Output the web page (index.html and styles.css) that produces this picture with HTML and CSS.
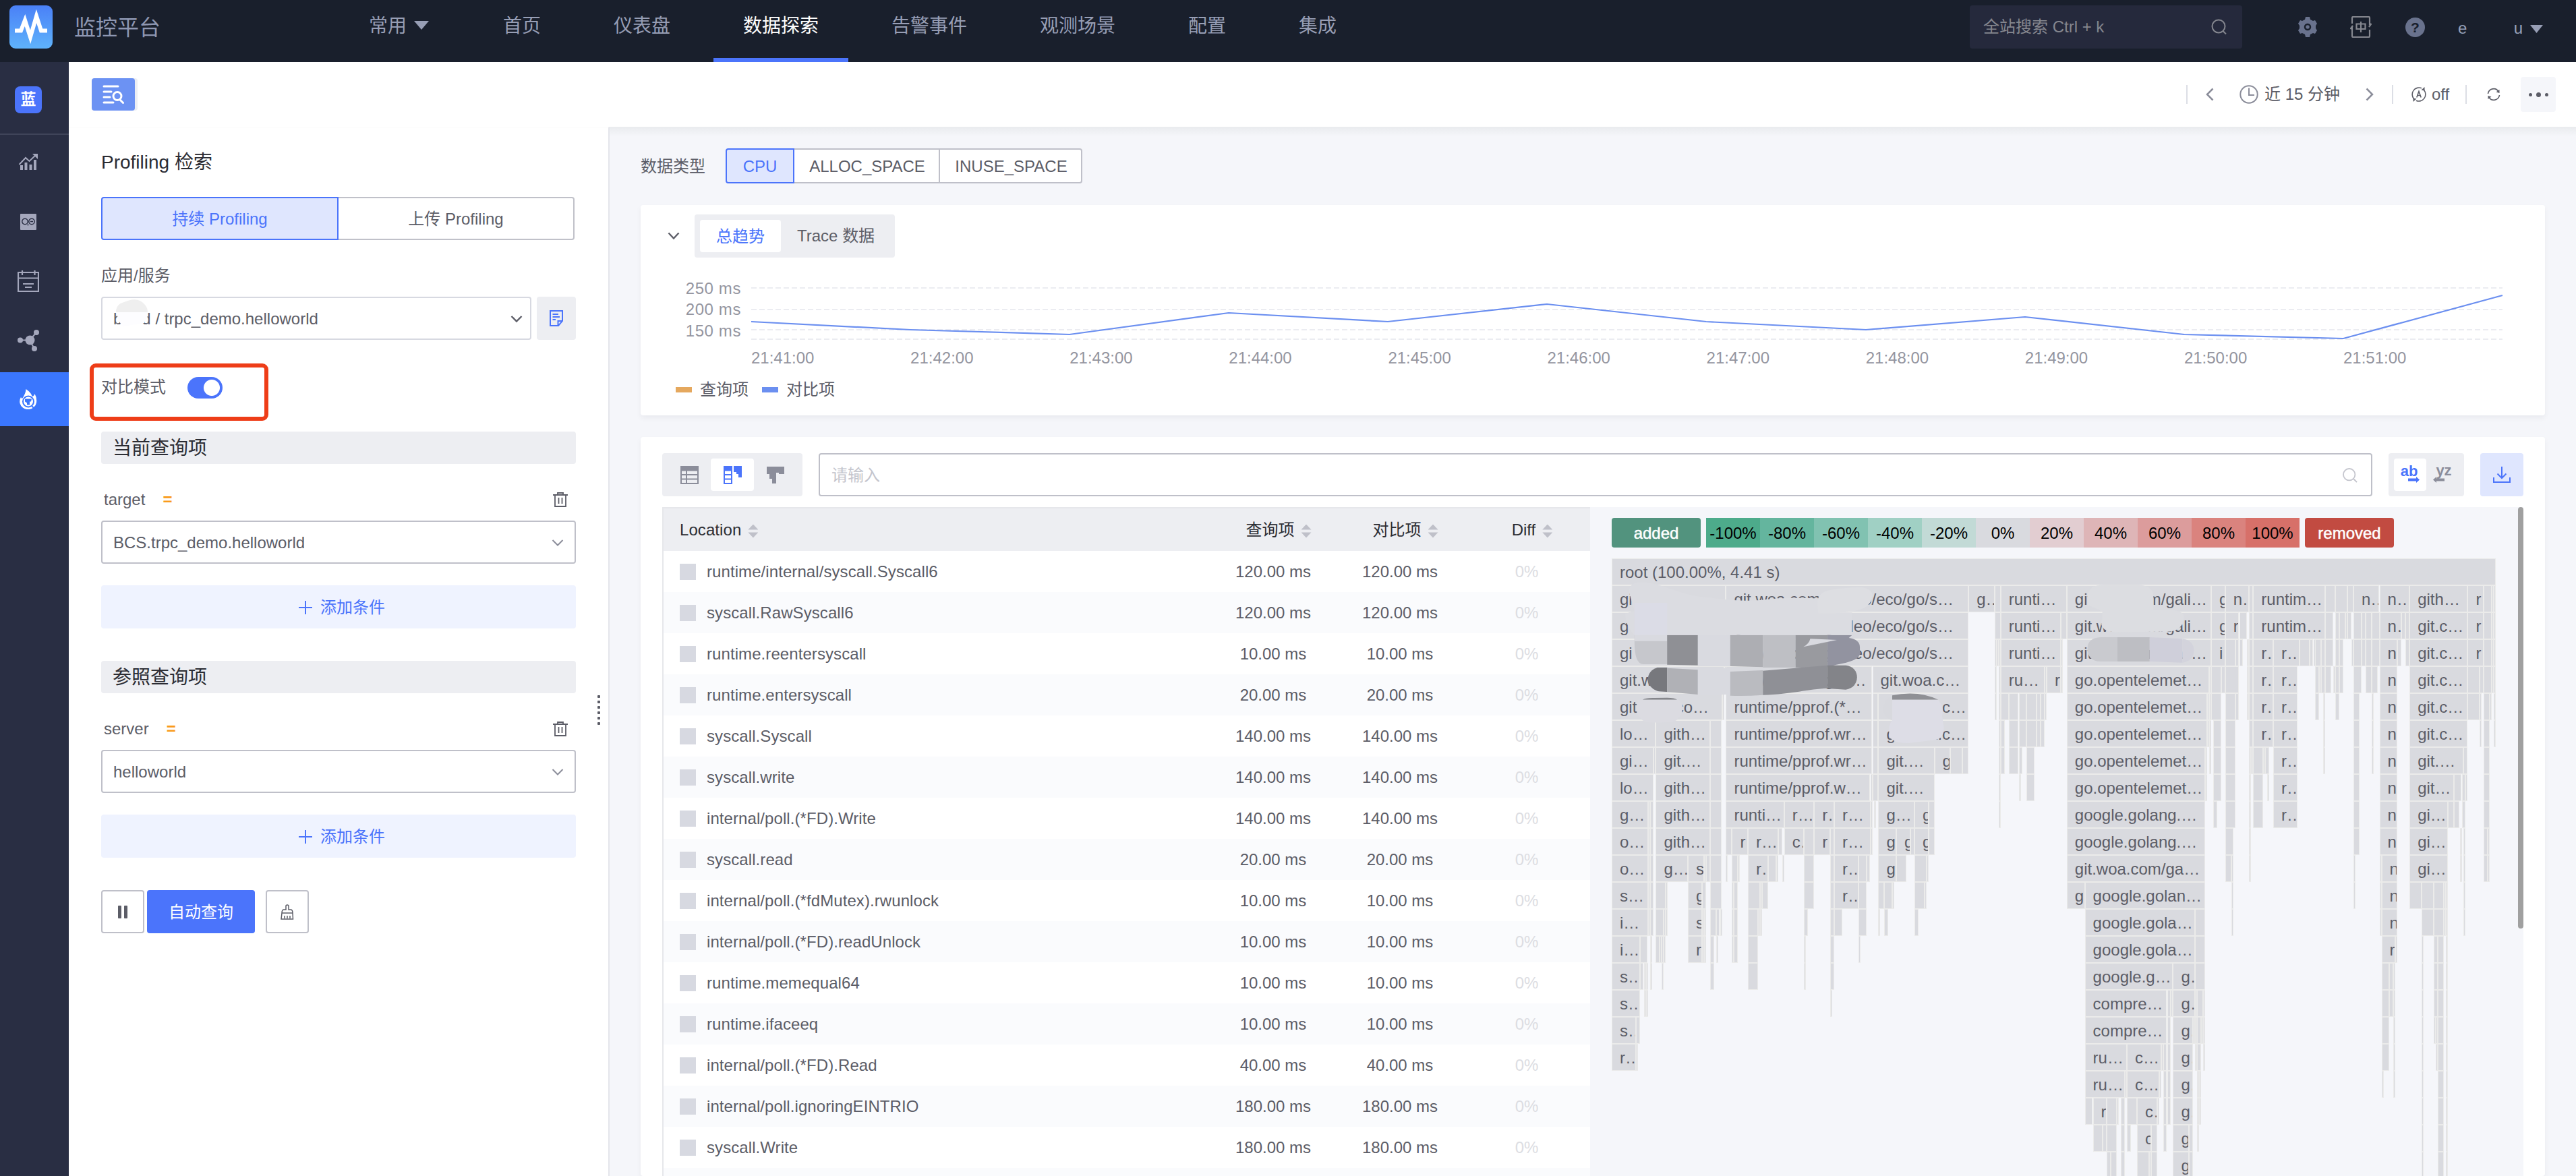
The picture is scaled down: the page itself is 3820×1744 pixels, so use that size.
FILE: index.html
```html
<!DOCTYPE html>
<html lang="zh-CN">
<head>
<meta charset="utf-8">
<title>监控平台</title>
<link rel="stylesheet" href="styles.css">
</head>
<body>
<header class="header">
  <svg class="logo" width="64" height="64" viewBox="0 0 64 64"><defs><linearGradient id="lg" x1="0" y1="0" x2="0" y2="1"><stop offset="0" stop-color="#4a80f7"/><stop offset="1" stop-color="#5fb3fb"/></linearGradient></defs><rect width="64" height="64" rx="9" fill="url(#lg)"/><path d="M8 37.500H17L23 22L31 47L40 16L47 37.500H56" fill="none" stroke="#fff" stroke-width="6"/></svg>
  <h1 class="brand">监控平台</h1>
  <nav class="nav">
    <a class="nav-item">常用<i class="tri"></i></a><a class="nav-item">首页</a><a class="nav-item">仪表盘</a><a class="nav-item active">数据探索</a><a class="nav-item">告警事件</a><a class="nav-item">观测场景</a><a class="nav-item">配置</a><a class="nav-item">集成</a>
  </nav>
  <div class="site-search"><span>全站搜索 Ctrl + k</span><svg width="24" height="24" viewBox="0 0 24 24" fill="none" stroke="#85878f" stroke-width="2"><circle cx="11" cy="11" r="9.500"/><path d="M17.500 18L22 22.500"/></svg></div>
  <svg class="h-gear" width="28" height="30" viewBox="0 0 28 30"><path fill="#69728d" d="M11 0h6l1 4 4 2 3-1 3 5-2 3v4l2 3-3 5-3-1-4 2-1 4h-6l-1-4-4-2-3 1-3-5 2-3v-4l-2-3 3-5 3 1 4-2z"/><circle cx="14" cy="15" r="4" fill="none" stroke="#191f2c" stroke-width="2.500"/></svg>
  <svg class="h-lang" width="32" height="32" viewBox="0 0 32 32" fill="none" stroke="#85878f" stroke-width="2.200"><path d="M3 11V2.500Q3 1 4.500 1H27.500Q29 1 29 2.500V13M29 20V29.500Q29 31 27.500 31H4.500Q3 31 3 29.500V16M.5 19L4 14M28 16L31.500 11M9.500 11.500H22.500V19H9.500ZM16 8V24"/></svg>
  <span class="h-help">?</span>
  <span class="user"><span>e</span><span>u</span></span><i class="tri user-tri"></i>
</header>
<div class="body">
  <aside class="side">
    <div class="biz"><span>蓝</span></div>
    <div class="side-item"><svg width="32" height="30" viewBox="0 0 32 30"><path d="M4 19h4v7H4zM10.500 15h4v11h-4zM17.500 18h4v8h-4zM24 11h4v15h-4z" fill="#a4a7bc"/><path d="M2.500 18L12 8L17.500 13L27 4" fill="none" stroke="#a4a7bc" stroke-width="2"/><path d="M22 2h8v8z" fill="#a4a7bc"/></svg></div>
    <div class="side-item"><svg width="24" height="24" viewBox="0 0 24 24"><rect width="24" height="24" rx="1" fill="#a4a7bc"/><g fill="none" stroke="#292e43" stroke-width="1.400"><circle cx="7" cy="11.500" r="4.200"/><circle cx="17" cy="11.500" r="4.200"/><path d="M15 11.500h4M10.500 16.500h2"/></g></svg></div>
    <div class="side-item"><svg width="32" height="32" viewBox="0 0 32 32" fill="none" stroke="#a4a7bc" stroke-width="2.200"><path d="M1 3H31V31H1ZM1 11.500H31M7 0V7M25.500 0V7M8 20H24M11 25H21"/></svg></div>
    <div class="side-item"><svg width="32" height="32" viewBox="0 0 32 32" fill="#a4a7bc"><path d="M4 15.500H18L28 4M18 16L25 28" stroke="#a4a7bc" stroke-width="2" fill="none"/><circle cx="18.500" cy="15.500" r="7"/><circle cx="4" cy="15.500" r="4"/><circle cx="28" cy="4" r="4"/><circle cx="25" cy="28" r="4"/></svg></div>
    <div class="side-item on"><svg width="26" height="30" viewBox="0 0 26 30"><path fill="#fff" d="M9.500 0C14 3 18 7 18.500 11Q22 10 22.500 7Q26 13 25 20A12.500 12 0 0 1 .5 21Q-.5 16 2 12Q3 14 4 14Q9 7 9.500 0Z"/><circle cx="13" cy="18.500" r="8" fill="none" stroke="#3a76fd" stroke-width="2"/><path d="M8 14.500h10l-1 4h-2v5h-4v-3l-3-2z" fill="#3a76fd"/><path d="M18 25l4 4" stroke="#3a76fd" stroke-width="2"/></svg></div>
  </aside>
  <main class="main">
    <div class="toolbar">
      <button class="filter-btn"><svg width="32" height="28" viewBox="0 0 32 28" fill="none" stroke="#fff" stroke-width="3" stroke-linecap="round"><path d="M2 2H23M2 10H13M2 18H11M2 26H16M26 22L30.500 26.500"/><circle cx="22" cy="16.500" r="6"/></svg></button>
      <div class="time-tools">
        <i class="vline"></i>
        <svg class="m27" width="12" height="20" viewBox="0 0 12 20" fill="none" stroke="#8b8d9a" stroke-width="2.500"><path d="M10.500 1.500L2 10L10.500 18.500"/></svg>
        <svg class="m38" width="28" height="28" viewBox="0 0 28 28" fill="none" stroke="#8b8d9a" stroke-width="2"><circle cx="14" cy="14" r="12.700"/><path d="M14 4.500V15H22"/></svg>
        <span class="t-range">近 15 分钟</span>
        <svg class="m38" width="12" height="20" viewBox="0 0 12 20" fill="none" stroke="#8b8d9a" stroke-width="2.500"><path d="M1.500 1.500L10 10L1.500 18.500"/></svg>
        <i class="vline m27"></i>
        <svg class="m27" width="22" height="24" viewBox="0 0 22 24" fill="none" stroke="#5c5d67" stroke-width="1.600"><path d="M3.500 18.500A10 10 0 0 1 15 2.800M18.500 5.500A10 10 0 0 1 7 21.200M7.800 16.500L11 7.500L14.200 16.500M8.800 13.500H13.200"/><path d="M14.500 5.500L19.500 1V6.500ZM7.500 18.500L2.500 23V17.500Z" fill="#5c5d67" stroke="none"/></svg>
        <span class="off">off</span>
        <i class="vline m22"></i>
        <svg class="m30" width="20" height="20" viewBox="0 0 20 20" fill="none" stroke="#5c5d67" stroke-width="1.600"><path d="M1.500 9A8.500 8.500 0 0 1 17 5.500M18.500 11A8.500 8.500 0 0 1 3 14.500"/><path d="M13.500 6.500L18.500 3V8ZM6.500 13.500L1.500 17V12Z" fill="#5c5d67" stroke="none"/></svg>
        <span class="more"><i></i><i class="mid"></i><i></i></span>
      </div>
    </div>
    <div class="cols">
      <section class="query">
        <h2 class="q-title">Profiling 检索</h2>
        <div class="tabs"><span class="on">持续 Profiling</span><span>上传 Profiling</span></div>
        <div class="label">应用/服务</div>
        <div class="app-row">
          <div class="select light"><span>b</span><span class="masked">d / trpc_demo.helloworld</span><svg class="chev" width="18" height="12" viewBox="0 0 18 12" fill="none" stroke="#5c5d67" stroke-width="2.400"><path d="M1.500 2L9 9.500L16.500 2"/></svg>
            <svg class="smudge" width="50" height="42" viewBox="0 0 50 42"><path d="M2 20Q2 8 14 5Q34 -4 44 8Q49 13 49 20Z" fill="#efefef"/><path d="M3 20H49V26Q44 32 44 36L12 41Q4 32 3 20Z" fill="#fdfdff"/></svg></div>
          <div class="doc-btn"><svg width="20" height="24" viewBox="0 0 20 24" fill="none" stroke="#4b74fb" stroke-width="2"><path d="M1 1H19V16L13 23H1ZM12.500 22V16H18M4.500 6H13M4.500 10H15M4.500 14H9"/></svg></div>
        </div>
        <div class="compare"><span>对比模式</span><i class="toggle"></i><i class="redbox"></i></div>
        <div class="group">当前查询项</div>
        <div class="field"><span>target</span><b>=</b><svg width="22" height="22" viewBox="0 0 22 22" fill="none" stroke="#5c5d67" stroke-width="1.800"><path d="M0 4H22M7 3V1H15V3M3 4V21H19V4M8.500 8V17M13.500 8V17"/></svg></div>
        <div class="select"><span>BCS.trpc_demo.helloworld</span><svg class="chev" width="18" height="12" viewBox="0 0 18 12" fill="none" stroke="#8b8d9a" stroke-width="2"><path d="M1.500 2L9 9.500L16.500 2"/></svg></div>
        <div class="add"><svg width="20" height="20" viewBox="0 0 20 20" stroke="#4b74fb" stroke-width="2"><path d="M0 10H20M10 0V20"/></svg>添加条件</div>
        <div class="group second">参照查询项</div>
        <div class="field"><span>server</span><b>=</b><svg width="22" height="22" viewBox="0 0 22 22" fill="none" stroke="#5c5d67" stroke-width="1.800"><path d="M0 4H22M7 3V1H15V3M3 4V21H19V4M8.500 8V17M13.500 8V17"/></svg></div>
        <div class="select"><span>helloworld</span><svg class="chev" width="18" height="12" viewBox="0 0 18 12" fill="none" stroke="#8b8d9a" stroke-width="2"><path d="M1.500 2L9 9.500L16.500 2"/></svg></div>
        <div class="add"><svg width="20" height="20" viewBox="0 0 20 20" stroke="#4b74fb" stroke-width="2"><path d="M0 10H20M10 0V20"/></svg>添加条件</div>
        <div class="actions"><span class="sq"><svg width="14" height="19" viewBox="0 0 14 19" fill="#5c5d67"><rect width="5" height="19" rx="1"/><rect x="9" width="5" height="19" rx="1"/></svg></span><span class="run">自动查询</span><span class="sq"><svg width="20" height="23" viewBox="0 0 20 23" fill="none" stroke="#5c5d67" stroke-width="1.500"><path d="M8 8V2Q10 0 12 2V8H15Q18 8 18 13H2Q2 8 5 8ZM2 13L1 22H18.500L18 13M6 21V17M10 21V17M14 21V17"/></svg></span></div>
        <div class="grip"><i></i><i></i><i></i><i></i><i></i><i></i></div>
      </section>
      <section class="content">
        <div class="type-row"><span>数据类型</span><div class="radios"><span class="on">CPU</span><span>ALLOC_SPACE</span><span>INUSE_SPACE</span></div></div>
        <div class="card trend">
          <div class="trend-head"><svg width="18" height="12" viewBox="0 0 18 12" fill="none" stroke="#5c5d67" stroke-width="2.400"><path d="M1.500 1.500L9 9.500L16.500 1.500"/></svg><div class="seg"><span class="on">总趋势</span><span>Trace 数据</span></div></div>
          <svg class="chart" width="2824" height="168" viewBox="950 382 2824 168">
            <g stroke="#ebecf1" stroke-width="2" stroke-dasharray="8 4"><path d="M1114 427H3711M1114 459H3711M1114 489H3711M1114 503H3711"/></g>
            <g class="axis y-axis" text-anchor="end"><text x="1099" y="436">250 ms</text><text x="1099" y="467">200 ms</text><text x="1099" y="499">150 ms</text></g>
            <g class="axis" id="ticks"></g>
            <polyline fill="none" stroke="#6b8ff0" stroke-width="2.200" points="1114,477 1350,489 1586,496 1822,464 2058,477 2294,451 2530,477 2767,489 3003,470 3239,496 3475,502 3711,438"/>
          </svg>
          <div class="legend"><i class="orange"></i>查询项<i class="blue"></i>对比项</div>
        </div>
        <div class="card profile">
          <div class="p-tools">
            <div class="views">
              <span><svg width="27" height="27" viewBox="0 0 27 27" fill="none" stroke="#8b8d9a" stroke-width="2"><path d="M1 1H26V26H1ZM1 13H26M1 19.500H26M9 7V26"/><path d="M0 0H27V7.500H0Z" fill="#8b8d9a" stroke="none"/></svg></span>
              <span class="on"><svg width="27" height="27" viewBox="0 0 27 27" fill="none" stroke="#4b74fb" stroke-width="2"><path d="M1 1H12V26H1ZM1 13H12M1 19.500H12"/><path d="M0 0H13V7.500H0ZM15 0H27V17H22V12H19V9H15Z" fill="#4b74fb" stroke="none"/></svg></span>
              <span><svg width="26" height="25" viewBox="0 0 26 25" fill="#8b8d9a"><path d="M0 0H26V11H18V9H14V25H8V18H4V11H0Z"/></svg></span>
            </div>
            <div class="search"><span>请输入</span><svg width="22" height="22" viewBox="0 0 22 22" fill="none" stroke="#c4c5cd" stroke-width="1.800"><circle cx="9.700" cy="9.700" r="8.700"/><path d="M16 16L21 21"/></svg></div>
            <div class="views dirs"><span class="on"><b class="ab">ab<svg width="17" height="9" viewBox="0 0 17 9" fill="#4b74fb"><path d="M0 2.500H12V0L17 4.500L12 9V6.500H0Z"/></svg></b></span><span><b class="yz">yz<svg width="17" height="9" viewBox="0 0 17 9" fill="#8b8d9a"><path d="M17 2.500H5V0L0 4.500L5 9V6.500H17Z"/></svg></b></span></div>
            <div class="download"><svg width="26" height="24" viewBox="0 0 26 24" fill="none" stroke="#4b74fb" stroke-width="2"><path d="M1 16V23H25V16M13 0V16M6.500 10.500L13 17L19.500 10.500"/></svg></div>
          </div>
          <div class="p-body">
            <div class="table">
              <div class="tr th"><div class="loc">Location<i class="sort"></i></div><div class="num">查询项<i class="sort"></i></div><div class="num">对比项<i class="sort"></i></div><div class="num">Diff<i class="sort"></i></div></div>
              <div id="rows"></div>
            </div>
            <div class="flame">
              <div class="scale"><span class="cap added">added</span><span class="cell c1">-100%</span><span class="cell c2">-80%</span><span class="cell c3">-60%</span><span class="cell c4">-40%</span><span class="cell c5">-20%</span><span class="cell c6">0%</span><span class="cell c7">20%</span><span class="cell c8">40%</span><span class="cell c9">60%</span><span class="cell c10">80%</span><span class="cell c11">100%</span><span class="cap removed">removed</span></div>
              <div id="graph"></div>
              <svg class="mask mask-a" width="730" height="500" viewBox="0 0 1568 1500" preserveAspectRatio="none">
                <path d="M137 605V632Q137 735 165 735H241V605Z" fill="#c6c7cc"/><path d="M137 605H241L339 632H137Z" fill="#d9dae0"/>
                <path d="M241 605H339V740L241 737Z" fill="#8f9095"/><path d="M339 605H442V745H339Z" fill="#d9dae0"/><path d="M442 605H546V748L442 744Z" fill="#adaeb3"/><path d="M546 605H650V750H546Z" fill="#bebfc4"/><path d="M650 605H752V750H650Z" fill="#999a9f"/><path d="M752 605H830L820 618Q855 625 855 660V690Q850 722 780 737L752 748Z" fill="#9293a0"/>
                <path d="M697 622L782 627L675 658Q693 645 697 622Z" fill="#d9dae0"/>
                <path d="M241 750H210C170 765 168 840 215 856L241 858Z" fill="#77787d"/><path d="M241 752L339 760V870L241 858Z" fill="#b0b1b6"/><path d="M339 752H442V870H339Z" fill="#d9dae0"/><path d="M442 768L546 762V872Q490 878 442 875Z" fill="#babbc0"/><path d="M546 764L752 740V842C690 845 640 868 546 872Z" fill="#8f9096"/><path d="M752 740H810C858 745 858 840 810 848L752 843Z" fill="#838489"/>
                <path d="M119 410C122 370 150 365 185 374C240 385 290 430 370 438C440 450 500 458 560 446C620 438 680 440 722 442L735 505H830V605H137C125 590 105 545 108 510L137 497Z" fill="#dbdce1"/>
                <path d="M137 462H241V605H137Z" fill="#dbdce6"/><path d="M720 455C725 400 770 400 850 392C900 395 900 430 888 460C870 500 830 500 780 508H722Z" fill="#dddee2"/>
                <path d="M163 893Q172 884 200 885L241 884V893ZM241 884Q265 884 273 893H241Z" fill="#85868b"/><path d="M147 893H280Q296 915 288 950Q280 990 250 992Q185 998 170 990Q140 970 145 920Z" fill="#dbdbe1"/>
                <path d="M930 930Q935 885 958 875V985Q930 975 930 930Z" fill="#d8d9de"/><path d="M958 874Q1040 850 1105 893H958Z" fill="#8f9095"/><path d="M958 893H1105Q1125 930 1117 965L1122 1010Q1125 1065 1095 1072L1010 1086Q945 1085 948 1040Q945 1005 958 985Z" fill="#dddde6"/>
              </svg>
              <svg class="mask mask-b" width="730" height="500" viewBox="0 0 1568 1500" preserveAspectRatio="none">
                <path d="M98 462V425Q105 382 150 382H260Q305 385 308 430V495H370Q405 497 405 530Q400 590 350 590L190 592Q130 590 145 530V500L98 470Z" fill="#dcdde1"/>
                <path d="M193 615H140Q98 618 98 665Q98 722 140 723H193Z" fill="#c9cacf"/><path d="M193 615H296V723H193Z" fill="#bdbec3"/><path d="M296 615L400 622V728L296 723Z" fill="#cfcfda"/><path d="M400 622Q437 630 437 675Q435 722 400 728Z" fill="#d3d3dc"/>
              </svg>
              <i class="bar"></i>
            </div>
          </div>
        </div>
      </section>
    </div>
  </main>
</div>
<script src="app.js"></script>
</body>
</html>
```
FILE: styles.css
```css
* { box-sizing: border-box; }
html, body { margin: 0; height: 1744px; overflow: hidden; }
body { font: 24px/32px "Liberation Sans", "Noto Sans CJK SC", sans-serif; color: #5c5d67; background: #fff; }
h1, h2 { margin: 0; font-weight: 400; }
svg { display: block; flex: none; }
i { font-style: normal; flex: none; }

.header { height: 92px; display: flex; align-items: flex-start; background: #191f2c; color: #96a0b9; padding-left: 14px; }
.logo { margin-top: 8px; }
.brand { margin: 21px 0 0 32px; width: 128px; font-size: 32px; line-height: 40px; white-space: nowrap; color: #8e97b2; }
.nav { display: flex; gap: 20px; margin-left: 265px; }
.nav-item { height: 92px; padding: 18px 44px 0; font-size: 28px; line-height: 42px; display: flex; color: #979eb5; white-space: nowrap; }
.nav-item.active { color: #fff; border-bottom: 6px solid #4b74fb; }
.tri { width: 22px; height: 13px; background: #979eb5; clip-path: polygon(0 0, 100% 0, 50% 100%); margin: 13px 2px 0 11px; }
.site-search { margin: 8px 0 0 auto; width: 404px; height: 64px; border-radius: 4px; background: #25293c; display: flex; align-items: center; justify-content: space-between; padding: 0 22px 0 20px; color: #85878f; }
.h-gear { margin: 25px 0 0 83px; }
.h-lang { margin: 24px 0 0 49px; }
.h-help { margin: 26px 0 0 50px; width: 29px; height: 29px; border-radius: 50%; background: #69728d; color: #191f2c; font-weight: 700; font-size: 21px; line-height: 29px; text-align: center; }
.user { margin: 26px 0 0 49px; width: 96px; display: flex; justify-content: space-between; }
.user-tri { width: 19px; height: 12px; margin: 37px 49px 0 11px; }

.body { display: flex; height: 1652px; }
.side { width: 102px; background: #292e43; flex: none; }
.biz { height: 108px; padding: 36px 0 0 22px; border-bottom: 2px solid #3f4459; }
.biz span { display: block; width: 40px; height: 40px; border-radius: 8px; background: #4b74fb; color: #fff; font-weight: 700; font-size: 23px; line-height: 39px; text-align: center; }
.side-item { height: 88px; width: 84px; padding-bottom: 7px; display: flex; align-items: center; justify-content: center; }
.side-item.on { width: 102px; height: 80px; padding: 0 18px 0 0; background: #3a76fd; }
.main { flex: 1; min-width: 0; }
.toolbar { height: 96px; display: flex; align-items: center; justify-content: space-between; padding: 0 30px 0 34px; }
.filter-btn { width: 64px; height: 48px; border: 0; border-radius: 4px; padding: 0; background: #6c92f3; box-shadow: 4px 0 0 #eceef3; display: flex; align-items: center; justify-content: center; }
.time-tools { display: flex; align-items: center; white-space: nowrap; }
.vline { width: 2px; height: 28px; background: #dcdee5; }
.m22 { margin-left: 22px; } .m27 { margin-left: 27px; } .m30 { margin-left: 30px; } .m38 { margin-left: 38px; }
.t-range { margin-left: 9px; width: 112px; }
.off { margin-left: 8px; width: 28px; }
.more { margin-left: 30px; width: 52px; height: 52px; border-radius: 4px; background: #f5f6fa; display: flex; align-items: center; justify-content: center; gap: 6px; }
.more i { width: 5px; height: 5px; border-radius: 50%; background: #5c5d67; }
.more .mid { width: 7px; height: 7px; }

.cols { display: flex; height: 1556px; }
.query { width: 802px; flex: none; padding: 32px 48px 0; position: relative; border-right: 2px solid #e4e5eb; border-top: 1px solid #fafafa; }
.q-title { font-size: 28px; line-height: 40px; color: #2b2c33; }
.tabs { margin-top: 31px; width: 702px; height: 64px; display: flex; }
.tabs span { flex: 1; border: 2px solid #c0c1c9; border-left: 0; border-radius: 0 4px 4px 0; line-height: 61px; text-align: center; }
.tabs .on { border: 2px solid #4b74fb; background: #dfe6fe; color: #4b74fb; border-radius: 4px 0 0 4px; }
.label { margin-top: 36px; line-height: 34px; height: 32px; }
.app-row { margin-top: 16px; display: flex; justify-content: space-between; width: 704px; }
.app-row .select { width: 638px; }
.select { width: 704px; height: 64px; border: 2px solid #bfc0c9; border-radius: 4px; display: flex; align-items: center; padding: 1px 16px 0; position: relative; }
.select.light { border-color: #d7d9e1; }
.masked { margin-left: 29px; }
.select .chev { margin-left: auto; }
.app-row .chev { margin-right: -5px; }
.smudge { position: absolute; left: 18px; top: 1px; }
.doc-btn { width: 58px; height: 64px; border-radius: 4px; background: #edeef2; display: flex; align-items: center; justify-content: center; }
.compare { position: relative; margin-top: 52px; height: 32px; line-height: 35px; display: flex; }
.toggle { margin: 3px 0 0 32px; width: 52px; height: 32px; border-radius: 16px; background: radial-gradient(circle at 36px 16px, #fff 11.500px, #4b74fb 12.500px); }
.redbox { position: absolute; left: -17px; top: -17px; width: 265px; height: 85px; border: 6px solid #ee3d18; border-radius: 9px; }
.group { margin-top: 52px; height: 48px; border-radius: 4px; background: #edeef2; padding-left: 17px; font-size: 28px; line-height: 49px; color: #2b2c33; }
.group.second { margin-top: 48px; }
.field { margin-top: 37px; height: 32px; padding: 0 12px 0 4px; display: flex; align-items: center; }
.field b { color: #f99b1c; margin-left: 26px; }
.field svg { margin-left: auto; }
.field + .select { margin-top: 15px; }
.add { margin-top: 32px; height: 64px; border-radius: 4px; background: #eff3ff; color: #4b74fb; display: flex; align-items: center; justify-content: center; gap: 12px; padding: 1px 0 0 10px; }
.actions { margin-top: 48px; display: flex; }
.actions > span { height: 64px; border-radius: 4px; display: flex; align-items: center; justify-content: center; }
.sq { width: 64px; border: 2px solid #bfc0c9; }
.run { width: 160px; margin: 0 16px 0 4px; padding-top: 1px; background: #4b74fb; color: #fff; font-size: 24px; }
.grip { position: absolute; left: 784px; top: 842px; display: flex; flex-direction: column; gap: 4px; }
.grip i { width: 4px; height: 4px; border-radius: 1px; background: #5c5d67; }

.content { flex: 1; min-width: 0; padding: 32px 46px 0; background: linear-gradient(#e9ebee, #f5f6fa 14px); display: flex; flex-direction: column; }
.type-row { display: flex; align-items: center; height: 52px; flex: none; }
.type-row > span { width: 126px; padding-top: 1px; }
.radios { display: flex; height: 52px; color: #5c5d67; }
.radios span { background: #fff; border: 2px solid #bfc0c9; border-left: 0; line-height: 49px; text-align: center; width: 216px; padding-left: 2px; }
.radios span:last-child { width: 211px; border-radius: 0 4px 4px 0; }
.radios .on { width: 102px; border: 2px solid #4b74fb; background: #dfe6fe; color: #4b74fb; border-radius: 4px 0 0 4px; padding: 0; }
.card { margin-top: 32px; background: #fff; border-radius: 4px; box-shadow: 0 4px 8px rgba(25, 25, 41, .05); flex: none; width: 2824px; }
.trend { height: 312px; padding-top: 14px; }
.trend-head { display: flex; align-items: center; padding-left: 40px; }
.seg { margin-left: 22px; height: 64px; width: 297px; border-radius: 4px; background: #edeef2; padding: 8px; display: flex; align-items: center; gap: 24px; line-height: 34px; }
.seg .on { width: 120px; height: 48px; line-height: 49px; text-align: center; background: #fff; border-radius: 4px; color: #4b74fb; }
.axis { font-size: 24px; fill: #94959f; }
.y-axis { letter-spacing: .6px; }
.legend { display: flex; align-items: center; height: 32px; line-height: 34px; margin-top: 12px; padding-left: 52px; }
.legend i { width: 24px; height: 8px; margin-right: 12px; }
.orange { background: #e5a85e; }
.legend .blue { background: #6b8ff0; margin-left: 20px; }

.profile { height: 1096px; padding: 24px 32px 0; }
.p-tools { display: flex; }
.views { width: 208px; height: 64px; border-radius: 4px; background: #edeef2; padding: 8px; display: flex; }
.views > span { flex: 1; display: flex; align-items: center; justify-content: center; border-radius: 4px; height: 48px; }
.views .on { background: #fff; }
.search { margin-left: 24px; width: 2304px; height: 64px; border: 2px solid #bfc0c9; border-radius: 4px; display: flex; align-items: center; justify-content: space-between; padding: 1px 20px 0 17px; color: #c4c5cd; }
.dirs { width: 112px; margin-left: 24px; }
.ab, .yz { position: relative; font-size: 22px; line-height: 24px; color: #4b74fb; margin: -10px 3px 0 0; }
.yz { color: #8b8d9a; margin: -12px 0 0; padding-left: 4px; }
.ab svg, .yz svg { position: absolute; left: 11px; top: 20px; }
.yz svg { left: 0; top: 21px; }
.download { margin-left: 24px; width: 64px; height: 64px; border-radius: 4px; background: #dfe6fe; display: flex; align-items: center; justify-content: center; }
.p-body { display: flex; margin-top: 16px; height: 992px; overflow: hidden; }
.table { width: 1376px; flex: none; border-left: 2px solid #e6e7eb; border-top: 2px solid #e6e7eb; }
.tr { height: 61px; display: flex; align-items: center; }
.tr:nth-child(even) { background: #fafbfd; }
.tr > div { height: 32px; display: flex; align-items: center; }
.tr .loc { flex: 1; padding-left: 24px; letter-spacing: .08px; }
.tr .num { width: 188px; justify-content: center; }
.tr .swatch { width: 24px; height: 24px; margin-right: 16px; background: #d7d9e1; }
.tr .pct { color: #dcdde2; }
.tr.th { height: 63px; background: #edeef2; color: #2b2c33; }
.th .num { padding-left: 16px; }
.sort { width: 15px; height: 20px; margin-left: 10px; position: relative; top: 2px; background: #bfc0c9; clip-path: polygon(50% 0, 100% 40%, 0 40%, 50% 0, 50% 100%, 0 60%, 100% 60%, 50% 100%); }

.flame { position: relative; width: 1384px; background: #f5f6fa; padding: 16px 0 0 32px; }
.scale { display: flex; height: 44px; color: #000; text-align: center; line-height: 45px; }
.cap { width: 132px; border-radius: 4px; color: #fff; -webkit-text-stroke: .5px #fff; }
.added { background: #52937e; margin-right: 8px; }
.removed { background: #c24b41; margin-left: 8px; }
.cell { width: 80px; }
.c1 { background: #4dab8b; } .c2 { background: #64b59e; } .c3 { background: #81c2b1; } .c4 { background: #a0d0c4; }
.c5 { background: #c2dad6; } .c6 { background: #d9dadf; } .c7 { background: #e2cdd1; } .c8 { background: #deb5b7; }
.c9 { background: #dc9c9c; } .c10 { background: #da837e; } .c11 { background: #d77069; }
#graph { margin-top: 16px; width: 1311px; }
.frow { position: relative; height: 40px; }
.frow span { position: absolute; top: 0; height: 40px; overflow: hidden; white-space: nowrap; background: #d9dadf; border: 1px solid #ebebea; line-height: 39px; text-indent: 11px; }
.mask { position: absolute; top: -12px; left: 2px; }
.mask-b { left: 692px; }
.bar { position: absolute; right: 0; top: 0; width: 8px; height: 625px; border-radius: 4px; background: #a0a0a0; }
```
FILE: app.js
```js
const ticks = document.getElementById('ticks');
for (let i = 0; i < 11; i++) {
  const t = document.createElementNS('http://www.w3.org/2000/svg', 'text');
  t.setAttribute('x', 1114 + i * 236.1);
  t.setAttribute('y', 539);
  t.textContent = '21:' + (41 + i) + ':00';
  ticks.appendChild(t);
}

const rows = [
  ['runtime/internal/syscall.Syscall6', 120], ['syscall.RawSyscall6', 120],
  ['runtime.reentersyscall', 10], ['runtime.entersyscall', 20],
  ['syscall.Syscall', 140], ['syscall.write', 140],
  ['internal/poll.(*FD).Write', 140], ['syscall.read', 20],
  ['internal/poll.(*fdMutex).rwunlock', 10], ['internal/poll.(*FD).readUnlock', 10],
  ['runtime.memequal64', 10], ['runtime.ifaceeq', 10],
  ['internal/poll.(*FD).Read', 40], ['internal/poll.ignoringEINTRIO', 180],
  ['syscall.Write', 180], ['', 0]
];
document.getElementById('rows').innerHTML = rows.map(([name, ms]) => name
  ? `<div class="tr"><div class="loc"><i class="swatch"></i>${name}</div><div class="num">${ms}.00 ms</div><div class="num">${ms}.00 ms</div><div class="num pct">0%</div></div>`
  : '<div class="tr"></div>').join('');

// One string per depth: "start-end label", in 10 ms samples out of 441.
const frames = [
  '0-441 root (100.00%, 4.41 s)',
  '0-57 gi|57-178 git.woa.com/galileo/eco/go/s…|178-191 g…|191-194|194-227 runti…|227-299 git.woa.com/gali…|299-306 g|306-318 n…|318-320|320-356 runtim…|356-361|361-367|367-370|370-383 n…|383-398 n…|398-427 gith…|427-435 r…|435-439|439-440|440-441',
  '0-57 g|57-178 git.woa.com/galileo/eco/go/s…|191-194|194-224 runti…|224-227|227-299 git.woa.com/gali…|299-306 g|306-313 r|313-317|318-320|320-356 runtim…|356-360|361-363|363-366|366-367|367-369|370-374|374-376|376-379|379-383|383-394 n…|394-396|396-398|398-427 git.c…|427-435 r…|435-439|439-440|440-441',
  '0-57 gi|57-178 git.woa.com/galileo/eco/go/s…|191-192|192-193|193-194|194-224 runti…|224-225|227-299 git.woa.com/gali…|299-306 i…|306-311|311-313|313-315|317-318|318-320|320-330 r…|330-343 r…|343-348|348-350|350-351|351-354|354-356|356-360|361-363|363-365|369-370|370-374|374-376|376-379|379-383|383-392 n|392-394|396-398|398-427 git.c…|427-435 r…|435-439|439-440|440-441',
  '0-56 git.w|56-57|57-130 git.woa.com/gali…|130-178 git.woa.c…|191-192|193-194|194-216 ru…|216-217|217-224 r|224-225|227-298 go.opentelemet…|298-299|299-304|304-306|306-313|317-318|318-320|320-330 r…|330-342 r…|351-353|353-354|354-356|356-359|360-361|361-363|363-365|370-374|376-379|379-382|383-392 n|398-427 git.c…|427-433|433-435|435-439|439-440|440-441',
  '0-55 git.woa.co…|55-56|57-130 runtime/pprof.(*…|130-133|133-178 git.woa.c…|191-192|193-194|194-198|198-203|203-207|207-212|212-214|214-216|216-217|227-297 go.opentelemet…|297-298|298-299|299-304|306-311|311-313|317-318|318-320|320-330 r…|330-342 r…|351-353|355-356|361-363|370-373|379-380|383-392 n|398-427 git.c…|427-433|433-434|435-438|438-439|440-441',
  '0-22 lo…|22-49 gith…|49-55|57-130 runtime/pprof.wr…|130-133|133-178 git.woa.c…|193-194|194-196|198-203|203-207|207-212|212-214|214-216|227-297 go.opentelemet…|297-298|298-299|300-304|306-311|318-320|320-330 r…|330-342 r…|355-356|370-373|379-380|383-392 n|398-427 git.c…|433-434|435-438|440-441',
  '0-21 gi…|21-22|22-49 git.…|49-55|57-130 runtime/pprof.wr…|130-133|133-161 git.…|161-169 g|169-175|175-178|193-194|194-196|198-203|203-205|207-211|227-296 go.opentelemet…|296-297|298-299|300-304|306-311|318-319|319-320|320-325|325-326|326-328|330-342 r…|355-356|370-373|379-380|383-392 n|398-425 git.…|425-427|435-438',
  '0-21 lo…|22-49 gith…|49-55|57-129 runtime/pprof.w…|129-130|130-133|133-161 git.…|193-194|203-204|207-211|227-296 go.opentelemet…|296-297|300-304|306-311|318-319|320-325|327-328|330-342 r…|370-373|383-392 n|398-420 git…|420-424|424-426|426-427|435-438',
  '0-18 g…|18-19|19-21|22-49 gith…|49-55|57-86 runti…|86-101 r…|101-111 r…|111-129 r…|129-130|131-132|133-151 g…|151-158 g|158-161|193-194|227-296 google.golang.…|300-302|306-311|318-319|320-325|330-342 r…|370-373|383-392 n|398-417 gi…|417-420|420-423|424-426|435-438',
  '0-18 o…|18-19|19-21|22-49 gith…|49-55|57-60|60-68 r…|68-83 r…|83-85|86-96 c…|96-101|101-109 r…|109-111|111-129 r…|129-130|133-142 g|142-149 g|149-151|151-158 g|158-161|227-296 google.golang.…|306-310|318-319|370-373|383-392 n|398-417 gi…|423-424|425-426|435-437|437-438',
  '0-18 o…|18-19|19-21|22-38 g…|38-46 s|46-47|47-49|49-55|57-58|60-63|63-64|68-78 r…|78-82|82-83|85-86|96-101|109-111|111-123 r…|123-127|127-129|133-142 g|142-147|151-157|157-158|227-296 git.woa.com/ga…|306-309|309-310|318-319|370-371|383-384|384-392 n|398-417 gi…|423-424|425-426|435-437|437-438',
  '0-18 s…|18-19|19-21|22-27|27-28|38-45 g|45-47|49-55|60-61|61-63|68-74|74-75|75-78|96-101|109-111|111-123 r…|123-127|133-136|136-140|140-141|151-156|156-157|227-236 g|236-296 google.golan…|309-310|370-371|383-384|384-392 n|398-404|404-410|410-415|415-416|416-417|425-426',
  '0-18 i…|18-19|19-21|22-26|26-27|27-28|38-45 s|45-46|46-47|49-52|52-54|54-55|60-61|61-63|68-73|73-74|74-75|96-98|109-111|111-115|123-127|133-134|136-138|151-153|236-291 google.gola…|291-296|309-310|383-384|384-392 n|404-410|410-415|415-416|416-417|425-426',
  '0-14 i…|14-18|19-20|22-24|24-25|25-26|26-27|38-45 r|45-46|46-47|49-51|52-53|60-61|61-63|68-73|96-97|109-111|123-124|236-291 google.gola…|291-296|384-391 r|391-392|404-405|410-412|412-415|416-417',
  '0-14 s…|14-16|16-17|17-18|19-20|25-26|49-51|68-73|96-97|109-111|236-280 google.g…|280-291 g…|291-296|384-388|388-390|390-391|404-405|410-412|412-415|416-417',
  '0-14 s…|16-17|17-18|109-110|236-277 compre…|277-279|279-280|280-291 g…|291-292|292-295|295-296|384-388|388-390|390-391|404-405|410-412|412-415|416-417',
  '0-12 s…|12-14|236-277 compre…|277-279|280-290 g…|290-291|291-292|292-294|294-295|295-296|384-388|390-391|404-405|410-411|411-412|412-415|416-417',
  '0-12 r…|12-13|236-257 ru…|257-274 c…|274-275|275-277|277-279|280-290 g…|291-292|292-294|295-296|384-388|390-391|404-405|411-412|412-415|416-417',
  '236-256 ru…|256-257|257-273 c…|273-274|275-277|277-279|280-290 g…|292-293|293-294|384-385|390-391|404-405|412-415|416-417',
  '236-240|240-247 r|247-252|252-253|254-256|257-262|262-272 c…|272-273|275-277|277-279|280-290 g…|292-293|293-294|404-405|412-415|416-417',
  '240-245|245-247|247-252|254-256|257-259|262-269 c|269-272|275-277|280-288 g|288-290|292-293|404-405|412-415|416-417',
  '247-249|249-252|254-256|262-268|268-269|269-272|280-288 g|288-290|404-405|412-415|416-417'
];
const unit = 1311 / 441;
document.getElementById('graph').innerHTML = frames.map(row => '<div class="frow">' + row.split('|').map(f => {
  const [, a, b, label] = f.match(/^(\d+)-(\d+) ?(.*)$/);
  return `<span style="left:${(a * unit).toFixed(1)}px;width:${((b - a) * unit).toFixed(1)}px">${label}</span>`;
}).join('') + '</div>').join('');
```
